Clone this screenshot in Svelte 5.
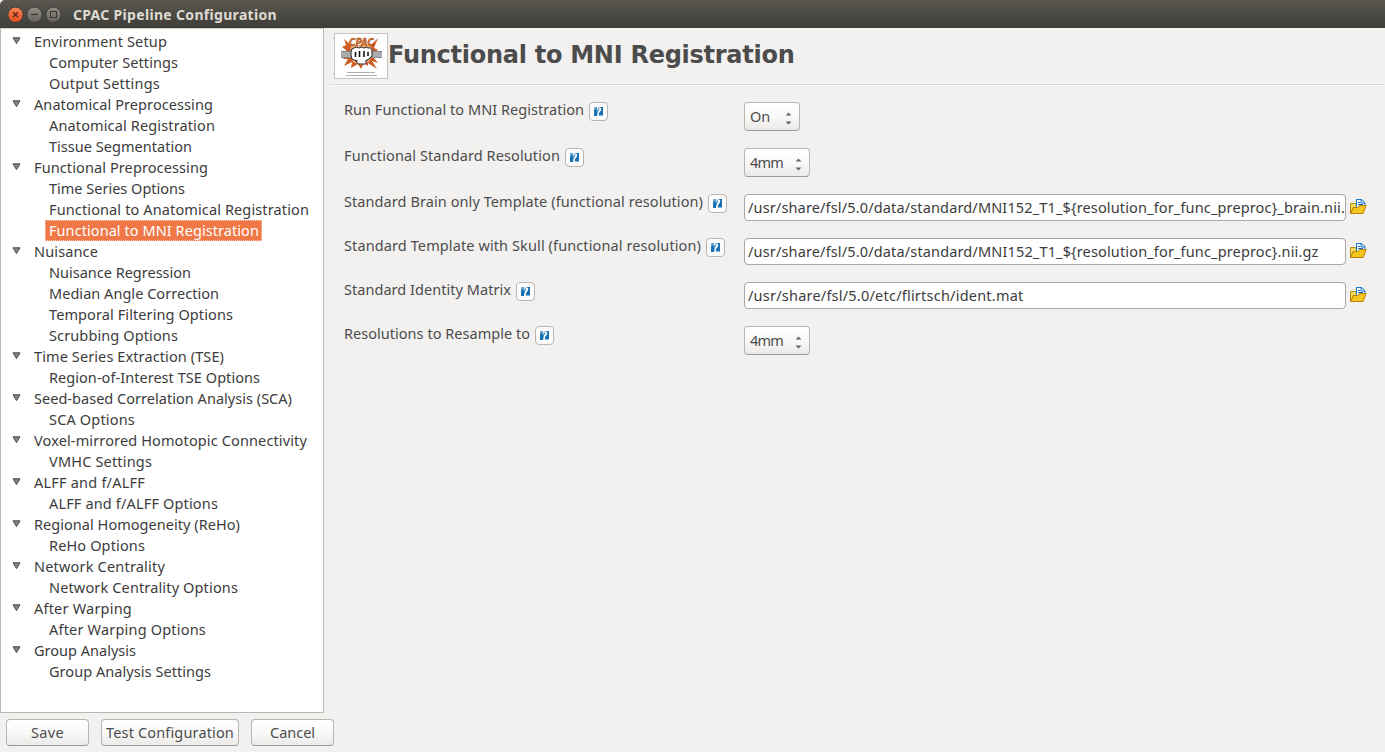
<script>
  // [label, text width, is child]
  const tree = [
    ['Environment Setup', 133, false],
    ['Computer Settings', 129, true],
    ['Output Settings', 111, true],
    ['Anatomical Preprocessing', 179, false],
    ['Anatomical Registration', 166, true],
    ['Tissue Segmentation', 143, true],
    ['Functional Preprocessing', 174, false],
    ['Time Series Options', 136, true],
    ['Functional to Anatomical Registration', 260, true],
    ['Functional to MNI Registration', 210, true],
    ['Nuisance', 64, false],
    ['Nuisance Regression', 142, true],
    ['Median Angle Correction', 170, true],
    ['Temporal Filtering Options', 184, true],
    ['Scrubbing Options', 129, true],
    ['Time Series Extraction (TSE)', 190, false],
    ['Region-of-Interest TSE Options', 211, true],
    ['Seed-based Correlation Analysis (SCA)', 258, false],
    ['SCA Options', 86, true],
    ['Voxel-mirrored Homotopic Connectivity', 273, false],
    ['VMHC Settings', 103, true],
    ['ALFF and f/ALFF', 111, false],
    ['ALFF and f/ALFF Options', 169, true],
    ['Regional Homogeneity (ReHo)', 206, false],
    ['ReHo Options', 96, true],
    ['Network Centrality', 131, false],
    ['Network Centrality Options', 189, true],
    ['After Warping', 98, false],
    ['After Warping Options', 157, true],
    ['Group Analysis', 102, false],
    ['Group Analysis Settings', 162, true]
  ];
  const selected = 'Functional to MNI Registration';

  const fields = [
    { label: 'Run Functional to MNI Registration', w: 240, select: 'On', sw: 56, tw: 20 },
    { label: 'Functional Standard Resolution', w: 216, select: '4mm', sw: 66, tw: 33 },
    { label: 'Standard Brain only Template (functional resolution)', w: 359, path: '/usr/share/fsl/5.0/data/standard/MNI152_T1_${resolution_for_func_preproc}_brain.nii.', tw: 597 },
    { label: 'Standard Template with Skull (functional resolution)', w: 357, path: '/usr/share/fsl/5.0/data/standard/MNI152_T1_${resolution_for_func_preproc}.nii.gz', tw: 570.5 },
    { label: 'Standard Identity Matrix', w: 167, path: '/usr/share/fsl/5.0/etc/flirtsch/ident.mat', tw: 275.5 },
    { label: 'Resolutions to Resample to', w: 186, select: '4mm', sw: 66, tw: 33 }
  ];

  const buttons = [
    ['Save', 83, 33],
    ['Test Configuration', 138, 128],
    ['Cancel', 83, 45]
  ];

  // Tracks the letters so that the text takes exactly the given width.
  function fit(node, width) {
    const natural = node.getBoundingClientRect().width;
    node.style.letterSpacing = (width - natural) / node.textContent.length + 'px';
  }
</script>

<div class="window">
  <header class="titlebar">
    <svg class="controls" width="58" height="18" viewBox="0 0 58 18">
      <defs>
        <linearGradient id="close" x1="0" y1="0" x2="0" y2="1"><stop offset="0" stop-color="#f8845a" /><stop offset="1" stop-color="#e2501f" /></linearGradient>
        <linearGradient id="grey" x1="0" y1="0" x2="0" y2="1"><stop offset="0" stop-color="#8f8d84" /><stop offset="1" stop-color="#66645c" /></linearGradient>
      </defs>
      <circle cx="9.5" cy="8.7" r="7.7" fill="url(#close)" stroke="#35342f" />
      <path d="M7 6.2l5 5m0-5l-5 5" stroke="#5b2412" stroke-width="1.3" />
      <circle cx="28.5" cy="8.7" r="7.7" fill="url(#grey)" stroke="#3a3934" />
      <path d="M25 8.500h7" stroke="#35342f" stroke-width="1.1" />
      <circle cx="47.5" cy="8.7" r="7.7" fill="url(#grey)" stroke="#3a3934" />
      <rect x="44.5" y="5.500" width="6" height="6" fill="none" stroke="#35342f" />
    </svg>
    <span class="title"><span use:fit={204}>CPAC Pipeline Configuration</span></span>
  </header>

  <div class="body">
    <aside>
      <nav class="tree">
        {#each tree as [label, width, child]}
          <div class="row" class:child>
            {#if !child}
              <svg class="arrow" width="9" height="8" viewBox="0 0 9 8"><path d="M1 .8h7L4.5 6.6z" fill="#858585" stroke="#4a4a4a" /></svg>
            {/if}
            <span class="item" class:selected={label === selected}><span use:fit={width}>{label}</span></span>
          </div>
        {/each}
      </nav>
      <footer>
        {#each buttons as [label, w, tw]}
          <button style:width="{w}px"><span use:fit={tw}>{label}</span></button>
        {/each}
      </footer>
    </aside>

    <main>
      <div class="heading">
        <svg class="logo" width="54" height="46" viewBox="0 0 54 46">
          <rect x=".5" y=".5" width="53" height="45" fill="#fff" stroke="#c3c3c3" />
          <path d="M10 6l7 6 20 0 7-7-4 10 4 2-4 3 0 5 4 5-6-2 5 8-9-6 0 3-4-3-3 6-3-5-7 4 1-6-8 4 4-7-5 0 4-5-1-4-4-3 4-2z" fill="#cf5c24" />
          <path d="M17 12l20 0 1 8-3 9-8 3-8-3-3-8z" fill="#f5ae78" />
          <rect x="7" y="18.500" width="41" height="6" fill="#a9abad" />
          <path d="M7 18.500h41M7 24.500h41" stroke="#85888b" />
          <text x="15" y="12.500" textLength="25" lengthAdjust="spacingAndGlyphs" class="brand">CPAC</text>
          <path d="M17 19q0-4 3-4 2-2 5 0 3-2 5 0 3-1.500 4 0 4-1 4 3l0 5-3 3-3 2v3h-8l-2-3-4-2-1-4z" fill="#fff" stroke="#2a2422" stroke-width="1" />
          <path d="M21.500 19v5M25.500 18v6M30 18v6M34 19v4" fill="none" stroke="#111" stroke-width="1.600" />
          <path d="M21 27l3 1M35 26l-4 2" fill="none" stroke="#555" stroke-width="1" />
          <path d="M13 39.500h28" stroke="#b0b0b0" />
          <path d="M12 42.500h31" stroke="#b0b0b0" />
        </svg>
        <h1><span use:fit={406.5}>Functional to MNI Registration</span></h1>
      </div>

      <div class="form">
        {#each fields as f}
          <div class="field">
            <div class="label">
              <span class="caption"><span use:fit={f.w}>{f.label}</span></span>
              <span class="help">
                <svg width="11" height="11" viewBox="0 0 11 11">
                  <path d="M1 1h3L3.500 4 5 4.500 4 10H1z" fill="#1672b5" />
                  <path d="M5 1h5v8.500H5.800L6 7 8 4.500 8.200 2z" fill="#1672b5" />
                  <path d="M1 1h3L1 5z" fill="#72acd5" />
                  <path d="M4.500 2.500h2L5.500 5H4.500z" fill="#3f8fc8" />
                </svg>
              </span>
            </div>
            {#if f.select}
              <div class="select" style:width="{f.sw}px">
                <span use:fit={f.tw}>{f.select}</span>
                <svg width="7" height="13" viewBox="0 0 7 13"><path d="M.5 3.500L3.500 .5l3 3zM.5 9.500h6l-3 3z" fill="#666" /></svg>
              </div>
            {:else}
              <div class="input"><span use:fit={f.tw}>{f.path}</span></div>
              <svg class="folder" width="17" height="17" viewBox="0 0 17 17">
                <path d="M.5 14.500V4.500h5l1 2h6v8z" fill="#f4dc5c" stroke="#b88a12" />
                <path d="M6.500 9V.5h5l3.500 3V9z" fill="#f3f9ff" stroke="#1470c8" />
                <path d="M11 .5v3.500h4M8 3.500h2M8 5.500h5" fill="none" stroke="#1470c8" />
                <path d="M.8 14.500L3 8.500h5l1.500-2h6.700l-3 8z" fill="#f6c51c" stroke="#b88208" />
              </svg>
            {/if}
          </div>
        {/each}
      </div>
    </main>
  </div>
</div>

<style>
  :global(body) { margin: 0; }
  .window {
    width: 1385px;
    height: 752px;
    overflow: hidden;
    display: flex;
    flex-direction: column;
    background: #f2f1f0;
    color: #4c4c4c;
    font: 14.5px/21px "Noto Sans", sans-serif;
    white-space: nowrap;
  }
  .titlebar {
    height: 28px;
    box-sizing: border-box;
    display: flex;
    align-items: center;
    gap: 9px;
    padding: 1px 0 0 6px;
    background: linear-gradient(#59574f, #3e3d39);
    border-radius: 5px 0 0 0;
    color: #dfdbd2;
    font-weight: 700;
    font-size: 14px;
  }
  .body { flex: 1; display: flex; min-height: 0; }
  aside { width: 334px; display: flex; flex-direction: column; }
  .tree {
    width: 324px;
    height: 685px;
    box-sizing: border-box;
    border: 1px solid #b8b5b2;
    border-top-color: #d0cecb;
    background: #fff;
    padding-top: 2px;
    color: #3c3c3c;
  }
  .row { height: 21px; display: flex; align-items: center; padding-left: 11px; }
  .row.child { padding-left: 44px; }
  .arrow { margin: -1px 9px 0 0; }
  .item {
    padding: 0 3px;
    height: 19px;
    line-height: 19px;
    border: 1px dotted transparent;
  }
  .item.selected { background: #f07746; color: #fff; border-color: #fbd0bd; padding-right: 2px; }
  footer { display: flex; gap: 12px; padding: 6px 0 0 6px; }
  button {
    flex: none;
    height: 27px;
    padding: 0;
    border: 1px solid #b9b5b0;
    border-bottom-color: #9d9995;
    border-radius: 4px;
    background: linear-gradient(#fff, #f9f9f8 50%, #ebeae9);
    color: #4c4c4c;
    font: inherit;
  }
  main { flex: 1; min-width: 0; }
  .heading {
    height: 57px;
    box-sizing: border-box;
    display: flex;
    align-items: flex-start;
    margin: 0 1px 0 -5px;
    padding: 5px 0 0 5px;
    border-bottom: 1px solid #dad9d7;
    box-shadow: 0 1px #fff;
  }
  h1 { margin: 0; font: bold 24px/44px "DejaVu Sans", sans-serif; color: #4c4c4c; }
  .brand { font: italic bold 10.5px "DejaVu Sans", sans-serif; fill: #d9772c; stroke: #8a3c14; stroke-width: .4px; }
  .form { display: flex; flex-direction: column; gap: 17px; padding: 17px 0 0 10px; }
  .field { display: flex; align-items: flex-start; }
  .label { width: 400px; display: flex; align-items: flex-start; gap: 5px; }
  .caption { line-height: 15px; }
  .help {
    width: 19px;
    height: 19px;
    box-sizing: border-box;
    border: 1px solid #b9b5b0;
    border-radius: 4px;
    background: #fcfcfc;
    display: flex;
    align-items: center;
    justify-content: center;
  }
  .select {
    height: 29px;
    box-sizing: border-box;
    display: flex;
    align-items: center;
    justify-content: space-between;
    padding: 0 7px 0 5px;
    border: 1px solid #b9b5b0;
    border-bottom-color: #9d9995;
    border-radius: 4px;
    background: linear-gradient(#fff, #f9f9f8 50%, #ebeae9);
  }
  .select span { margin-top: -1px; }
  .select svg { margin-top: 3px; }
  .input {
    width: 602px;
    height: 27px;
    box-sizing: border-box;
    border: 1px solid #aaa6a2;
    border-radius: 4px;
    background: #fff;
    color: #3c3c3c;
    line-height: 24px;
    padding-left: 3px;
    overflow: hidden;
  }
  .folder { margin: 5px 0 0 4px; }
</style>
